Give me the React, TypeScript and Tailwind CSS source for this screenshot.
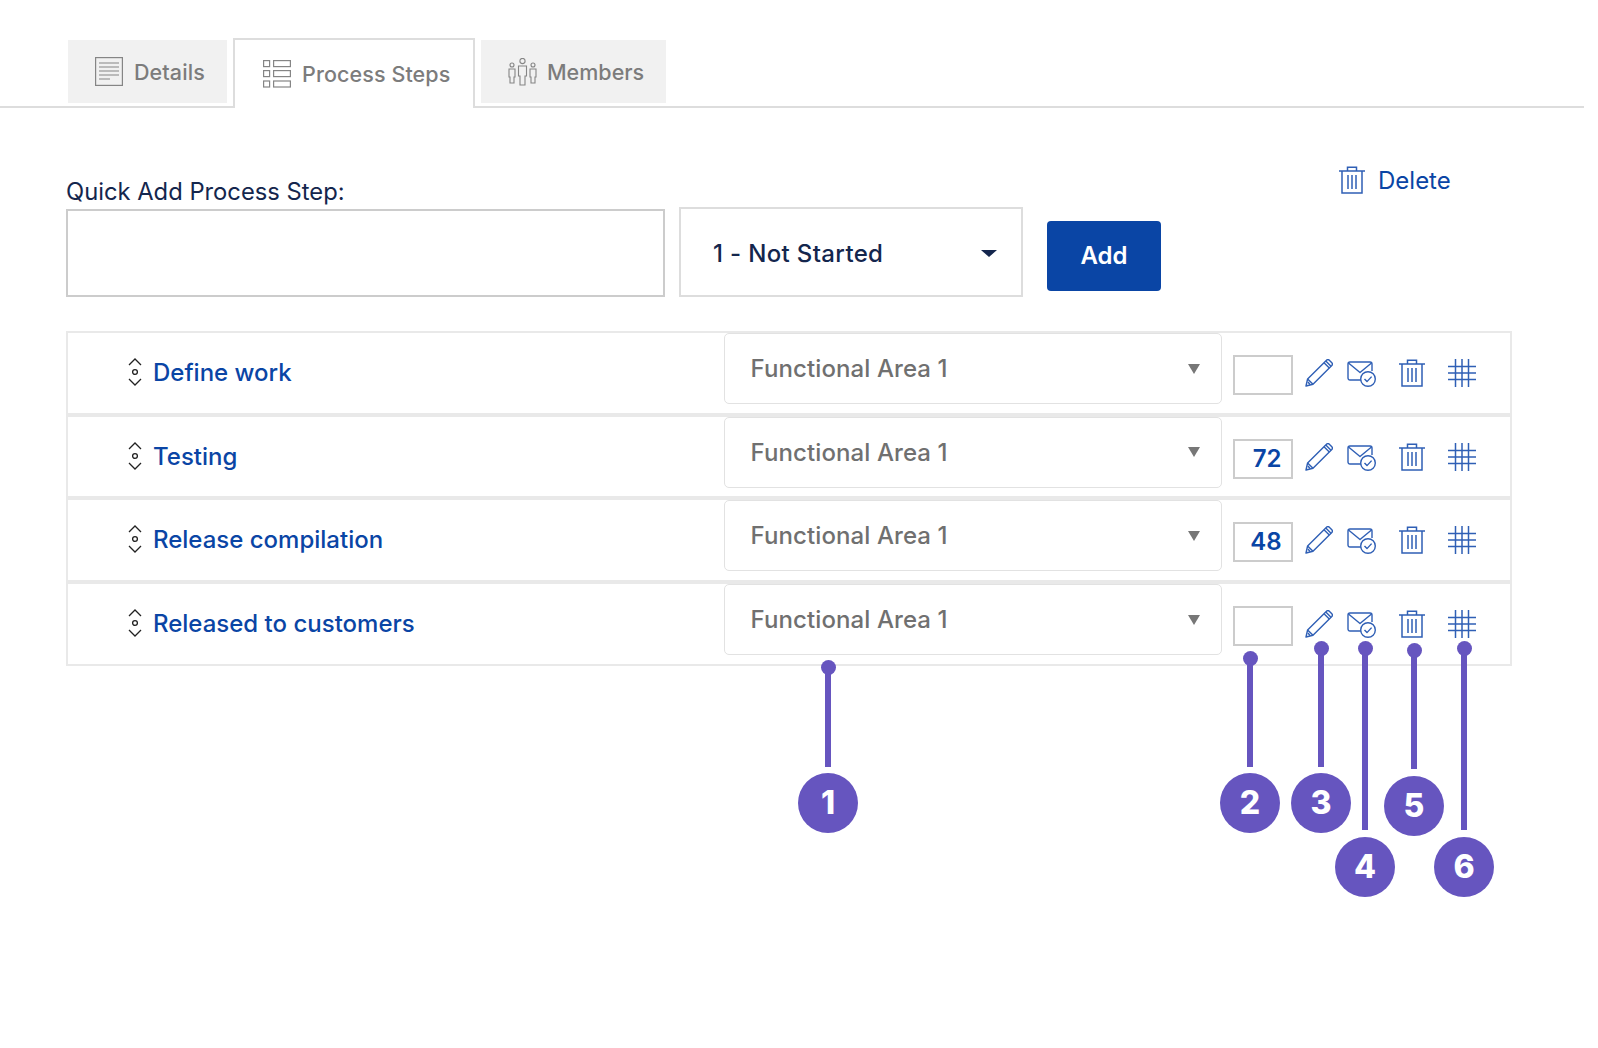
import React from "react";

const Trash = ({ className }: { className?: string }) => (
  <svg viewBox="0 0 26 28" className={className} fill="none" stroke="#2f5fb5" strokeWidth="1.5">
    <path d="M0 5H26M8.5 5V1.2H17.5V5M3 5V27H23V5M9 9V23M13 9V23M17 9V23" />
  </svg>
);
const Pencil = () => (
  <svg viewBox="0 0 28 28" className="w-[28px] h-[28px] shrink-0" fill="none" stroke="#2f5fb5" strokeWidth="1.4" strokeLinejoin="round">
    <path d="M1 27L2.6 20L21.5 1.2C22.4 0.4 23.5 0.4 24.3 1.2L26.8 3.7C27.6 4.5 27.6 5.6 26.8 6.5L8 25.3L1 27Z" />
    <path d="M2.6 20L8 25.3M19 3.8L24.3 9M20.8 2L26 7.2M3 23L5 25.5" />
  </svg>
);
const Mail = () => (
  <svg viewBox="0 0 29 28" className="w-[29px] h-[28px] shrink-0" fill="none" stroke="#2f5fb5" strokeWidth="1.4" strokeLinejoin="round">
    <path d="M14 21H3C1.8 21 1 20.2 1 19V5C1 3.8 1.8 3 3 3H23C24.2 3 25 3.8 25 5V12" />
    <path d="M1.5 4L13 13.5L24.5 4" />
    <circle cx="21" cy="20" r="7.3" fill="#fff" />
    <path d="M17.5 20L20 22.6L24.6 17.6" />
  </svg>
);
const Hash = () => (
  <svg viewBox="0 0 28 28" className="w-[28px] h-[28px] shrink-0" fill="none" stroke="#2f5fb5" strokeWidth="1.5">
    <path d="M7.5 0V28M14 0V28M20.5 0V28M0 7.5H28M0 14H28M0 20.5H28" />
  </svg>
);
const Drag = () => (
  <svg viewBox="0 0 14 28" className="w-[14px] h-[28px] shrink-0 -mt-[2px]" fill="none" stroke="#222" strokeWidth="1.3">
    <path d="M1 7L7 1L13 7M1 21L7 27L13 21" />
    <circle cx="7" cy="14" r="2.4" />
  </svg>
);
const DocIcon = () => (
  <svg viewBox="0 0 28 29" className="w-[28px] h-[29px] shrink-0" fill="none" stroke="#858585" strokeWidth="1.2">
    <rect x="0.6" y="0.6" width="26.8" height="27.8" />
    <path d="M4 6H24M4 10H24M4 14H24M4 18H24M4 22H15" />
  </svg>
);
const ListIcon = () => (
  <svg viewBox="0 0 28 28" className="w-[28px] h-[28px] shrink-0" fill="none" stroke="#858585" strokeWidth="1.2">
    <rect x="0.6" y="0.6" width="6" height="6" />
    <rect x="10.6" y="0.6" width="16.8" height="6" />
    <rect x="0.6" y="10.6" width="6" height="6" />
    <rect x="10.6" y="10.6" width="16.8" height="6" />
    <rect x="0.6" y="21" width="6" height="6" />
    <rect x="10.6" y="21" width="16.8" height="6" />
  </svg>
);
const PeopleIcon = () => (
  <svg viewBox="0 0 29 28" className="w-[29px] h-[28px] shrink-0" fill="none" stroke="#858585" strokeWidth="1.1">
    <circle cx="14.5" cy="3" r="2.6" />
    <circle cx="4" cy="7" r="2" />
    <circle cx="25" cy="7" r="2" />
    <path d="M10.5 8H18.5V18H17V27H12V18H10.5V8Z" />
    <path d="M1 11H7V19H6V25H2V19H1V11Z" />
    <path d="M22 11H28V19H27V25H23V19H22V11Z" />
  </svg>
);

const Row = ({ name, value }: { name: string; value: string }) => (
  <div className="flex items-center h-[83.7px] border-2 border-[#e9e9e9] pl-[60px]">
    <Drag />
    <a className="ml-[11px] w-[570.5px] text-[24px] font-medium text-[#0a45a5] leading-none">{name}</a>
    <div className="self-start flex items-center justify-between w-[498px] h-[71px] border border-[#e2e2e2] rounded-[5px] pl-[26px] pr-[21px] bg-white">
      <span className="text-[24px] font-medium text-[#707070] tracking-[0.1px] mt-[1px]">Functional Area 1</span>
      <span className="w-0 h-0 border-x-[6px] border-x-transparent border-t-[10px] border-t-[#777]" />
    </div>
    <div className="ml-[11px] mt-[4px] w-[60px] h-[40px] shrink-0 border-2 border-[#cccccc] flex items-center justify-end pr-[9px] text-[24px] font-semibold text-[#0a45a5]">{value}</div>
    <div className="ml-[12px]"><Pencil /></div>
    <div className="ml-[14px]"><Mail /></div>
    <div className="ml-[23px]"><Trash className="w-[26px] h-[28px] shrink-0" /></div>
    <div className="ml-[23px]"><Hash /></div>
  </div>
);

const Pin = ({ n, x, dotY, lineEnd, circleY, circleX }: { n: string; x: number; dotY: number; lineEnd: number; circleY: number; circleX: number }) => (
  <>
    <div className="absolute w-[6px] bg-[#6655bf]" style={{ left: x - 3, top: dotY, height: lineEnd - dotY }} />
    <div className="absolute w-[15px] h-[15px] rounded-full bg-[#6655bf]" style={{ left: x - 7.5, top: dotY - 7.5 }} />
    <div className="absolute w-[60px] h-[60px] rounded-full bg-[#6655bf] flex items-center justify-center text-white text-[32px] font-extrabold font-['Inter',sans-serif]" style={{ left: circleX, top: circleY }}>{n}</div>
  </>
);

export default function App() {
  return (
    <div className="relative w-full min-h-screen bg-white font-['Inter',sans-serif] overflow-hidden">
      <div className="flex w-[1584px] pl-[68px] pt-[36px] border-b-2 border-[#dddddd] h-[108px]">
        <div className="mt-[4px] h-[63px] w-[159px] bg-[#f1f1f1] flex items-center pl-[27px] gap-[11px] text-[21.5px] font-medium text-[#7c7c7c]">
          <DocIcon /><span className="tracking-[0.1px] mt-[1px]">Details</span>
        </div>
        <div className="ml-[6px] h-[70px] w-[242px] border-2 border-b-0 border-[#dddddd] bg-white relative top-[2px] flex items-center pl-[28px] gap-[11px] text-[21.5px] font-medium text-[#7c7c7c]">
          <ListIcon /><span className="tracking-[0.1px]">Process Steps</span>
        </div>
        <div className="ml-[6px] mt-[4px] h-[63px] w-[185px] bg-[#f1f1f1] flex items-center pl-[27px] gap-[10px] text-[21.5px] font-medium text-[#7c7c7c]">
          <PeopleIcon /><span className="mt-[1px]">Members</span>
        </div>
      </div>

      <div className="flex items-end ml-[66px] mt-[58px] h-[131px]">
        <div className="w-[599px] flex flex-col">
          <label className="text-[23.75px] pt-[2px] leading-[32px] text-[#14264d]">Quick Add Process Step:</label>
          <div className="mt-[1px] h-[88px] border-2 border-[#cccccc] bg-white" />
        </div>
        <div className="ml-[14px] w-[344px] h-[90px] border-2 border-[#dddddd] flex items-center justify-between pl-[32px] pr-[24px]">
          <span className="text-[24px] font-medium text-[#14264d] tracking-[0.35px] mt-[3px]">1 - Not Started</span>
          <span className="w-0 h-0 border-x-[8px] border-x-transparent border-t-[7px] border-t-[#14264d] mt-[2px]" />
        </div>
        <button className="ml-[24px] mb-[6px] w-[114px] h-[70px] rounded-[4px] bg-[#0a45a5] text-white text-[24px] font-semibold">Add</button>
        <div className="self-start -mt-[3px] flex items-center ml-[178px] gap-[13px]">
          <Trash className="w-[26px] h-[28px] -mt-[3px]" />
          <span className="text-[24px] text-[#0a45a5]">Delete</span>
        </div>
      </div>

      <div className="ml-[66px] mt-[34px] w-[1446px]">
        <Row name="Define work" value="" />
        <Row name="Testing" value="72" />
        <Row name="Release compilation" value="48" />
        <Row name="Released to customers" value="" />
      </div>

      <Pin n="1" x={828} dotY={667} lineEnd={767} circleX={798} circleY={773} />
      <Pin n="2" x={1250} dotY={658} lineEnd={767} circleX={1220} circleY={773} />
      <Pin n="3" x={1321} dotY={648} lineEnd={767} circleX={1291} circleY={773} />
      <Pin n="4" x={1365} dotY={648} lineEnd={830} circleX={1335} circleY={837} />
      <Pin n="5" x={1414} dotY={650} lineEnd={769} circleX={1384} circleY={776} />
      <Pin n="6" x={1464} dotY={648} lineEnd={830} circleX={1434} circleY={837} />
    </div>
  );
}
